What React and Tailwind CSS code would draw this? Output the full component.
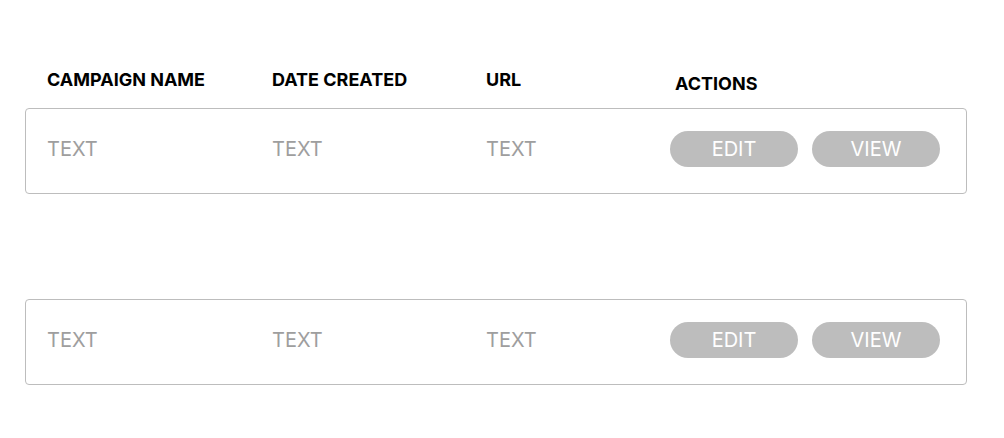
const rows = [1, 2];

const Row = () => (
  <div className="mx-[25px] w-[942px] h-[86px] border border-[#bdbdbd] rounded-[4px] flex items-center pl-[21px] pb-[5px] text-[20px] text-[#9e9e9e]">
    <div className="w-[225px]">TEXT</div>
    <div className="w-[214px]">TEXT</div>
    <div className="w-[184px]">TEXT</div>
    <div className="flex gap-[14px]">
      <button className="w-[128px] h-[36px] rounded-full bg-[#bdbdbd] text-white text-[20px]">EDIT</button>
      <button className="w-[128px] h-[36px] rounded-full bg-[#bdbdbd] text-white text-[20px]">VIEW</button>
    </div>
  </div>
);

const App = () => {
  return (
    <div className="w-[1004px] h-[438px] pt-[70px] bg-white font-['Inter',sans-serif]">
      <div className="flex items-start h-[20px] pl-[47px] text-[18px] leading-[20px] font-bold text-black">
        <div className="w-[225px]">CAMPAIGN NAME</div>
        <div className="w-[214px]">DATE CREATED</div>
        <div className="w-[189px]">URL</div>
        <div className="mt-[4px]">ACTIONS</div>
      </div>
      <div className="mt-[18px] flex flex-col gap-[105px]">
        {rows.map((r) => (
          <Row key={r} />
        ))}
      </div>
    </div>
  );
};

export default App;
